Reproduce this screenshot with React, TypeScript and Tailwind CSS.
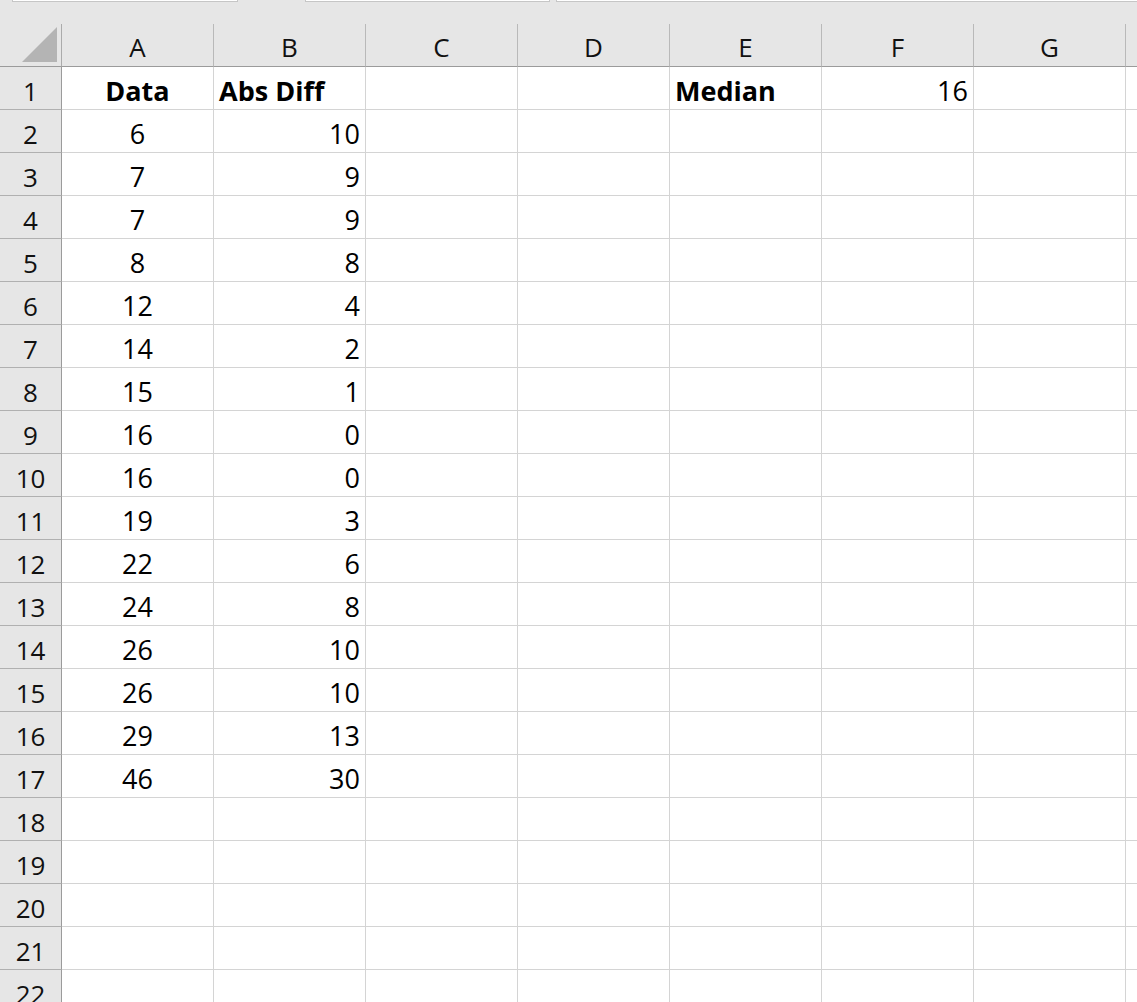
import React from "react";

const cols = ["A", "B", "C", "D", "E", "F", "G"];

const data: [number, number][] = [
  [6, 10],
  [7, 9],
  [7, 9],
  [8, 8],
  [12, 4],
  [14, 2],
  [15, 1],
  [16, 0],
  [16, 0],
  [19, 3],
  [22, 6],
  [24, 8],
  [26, 10],
  [26, 10],
  [29, 13],
  [46, 30],
];

const font = { fontFamily: '"Open Sans", "Noto Sans", sans-serif' };

const cell =
  "h-[43px] border-r border-b border-[#d4d4d4] px-[5px] pb-[5px] flex items-end whitespace-nowrap leading-none";

const App = () => {
  const rows = Array.from({ length: 22 }, (_, i) => i + 1);

  const getCell = (r: number, c: number) => {
    if (r === 1) {
      if (c === 0) return { text: "Data", bold: true, align: "justify-center" };
      if (c === 1) return { text: "Abs Diff", bold: true, align: "justify-start" };
      if (c === 4) return { text: "Median", bold: true, align: "justify-start" };
      if (c === 5) return { text: "16", bold: false, align: "justify-end" };
      return null;
    }
    const d = data[r - 2];
    if (!d) return null;
    if (c === 0) return { text: String(d[0]), bold: false, align: "justify-center" };
    if (c === 1) return { text: String(d[1]), bold: false, align: "justify-end" };
    return null;
  };

  return (
    <div
      className="w-[1137px] h-[1002px] overflow-hidden bg-white text-[27px] text-black"
      style={font}
    >
      {/* formula bar edge */}
      <div className="h-[24px] bg-[#e6e6e6] relative">
        <div className="absolute left-[12px] top-0 w-[226px] h-[2px] bg-white border-b border-x border-[#c6c6c6]" />
        <div className="absolute left-[305px] top-0 w-[245px] h-[2px] bg-white border-b border-x border-[#c6c6c6]" />
        <div className="absolute left-[556px] top-0 w-[600px] h-[2px] bg-white border-b border-l border-[#c6c6c6]" />
      </div>

      <div className="grid grid-cols-[62px_repeat(7,152px)_1fr]">
        {/* header row */}
        <div className="h-[43px] bg-[#e6e6e6] border-r border-b border-r-[#ababab] border-b-[#9b9b9b] flex items-end justify-end pr-[3px] pb-[3px]">
          <svg width="36" height="36" viewBox="0 0 36 36">
            <polygon points="0,35 35,0 35,35" fill="#b4b4b4" />
          </svg>
        </div>
        {cols.map((c) => (
          <div
            key={c}
            className="h-[43px] bg-[#e6e6e6] border-r border-b border-r-[#b9b9b9] border-b-[#9b9b9b] flex items-end justify-center pb-[6px] text-[26px] leading-none text-[#111]"
          >
            {c}
          </div>
        ))}
        <div className="h-[43px] bg-[#e6e6e6] border-b border-b-[#9b9b9b]" />

        {rows.map((r) => (
          <React.Fragment key={r}>
            <div className="h-[43px] bg-[#e6e6e6] border-r border-b border-r-[#9b9b9b] border-b-[#b0b0b0] flex items-end justify-center pb-[5px] text-[26px] leading-none text-[#111]">
              {r}
            </div>
            {cols.map((c, ci) => {
              const v = getCell(r, ci);
              return (
                <div key={c} className={`${cell} ${v ? v.align : ""} ${v && v.bold ? "font-bold" : ""}`}>
                  {v ? v.text : ""}
                </div>
              );
            })}
            <div className="h-[43px] border-b border-[#d4d4d4]" />
          </React.Fragment>
        ))}
      </div>
    </div>
  );
};

export default App;
